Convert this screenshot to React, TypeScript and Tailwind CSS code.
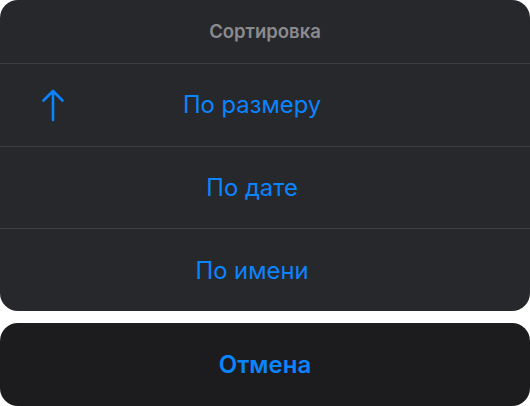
const options = ["По размеру", "По дате", "По имени"];

function ArrowUp() {
  return (
    <svg className="h-[34px] w-[24px]" viewBox="0 0 24 34" fill="none" aria-hidden="true">
      <path d="M12 32V3M2.5 12.5 12 3l9.5 9.5" stroke="currentColor" strokeWidth="2.6" strokeLinecap="round" strokeLinejoin="round" />
    </svg>
  );
}

export default function App() {
  return (
    <div
      className="flex h-[406px] w-[530px] flex-col bg-white"
      style={{ fontFamily: "Inter, 'Noto Sans', sans-serif" }}
    >
      <div className="flex h-[311px] flex-col overflow-hidden rounded-[18px] bg-[#27282b]">
        <div className="flex h-[64px] items-center justify-center border-b border-[#3d3e41] pt-[1px] text-[18.5px] font-semibold text-[#8b8b8f]">
          Сортировка
        </div>
        {options.map((label, i) => (
          <div
            key={label}
            className={`relative flex flex-1 items-center justify-center pr-[26px] pt-[1px] text-[23.8px] text-[#0a84ff] ${
              i < options.length - 1 ? "border-b border-[#3d3e41]" : ""
            }`}
          >
            {i === 0 && (
              <span className="absolute left-[41px] top-1/2 -translate-y-1/2 text-[#0a84ff]">
                <ArrowUp />
              </span>
            )}
            {label}
          </div>
        ))}
      </div>
      <div className="mt-[12px] flex flex-1 items-center justify-center rounded-[18px] bg-[#1c1c1e] text-[24px] font-semibold text-[#0a84ff]">
        Отмена
      </div>
    </div>
  );
}
